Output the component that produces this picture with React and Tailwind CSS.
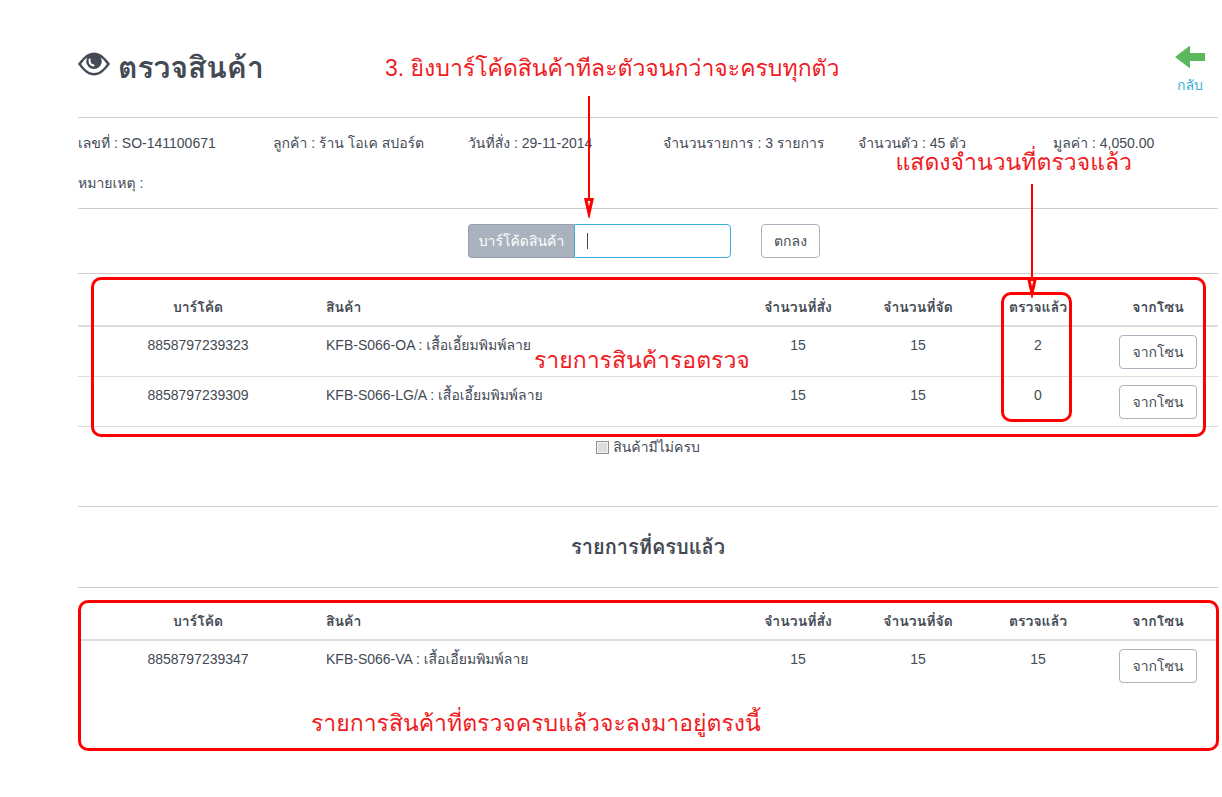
const info = [
  'เลขที่ : SO-141100671',
  'ลูกค้า : ร้าน โอเค สปอร์ต',
  'วันที่สั่ง : 29-11-2014',
  'จำนวนรายการ : 3 รายการ',
  'จำนวนตัว : 45 ตัว',
  'มูลค่า : 4,050.00',
];

const waiting = [
  { code: '8858797239323', name: 'KFB-S066-OA : เสื้อเอี้ยมพิมพ์ลาย', ordered: 15, prepared: 15, checked: 2 },
  { code: '8858797239309', name: 'KFB-S066-LG/A : เสื้อเอี้ยมพิมพ์ลาย', ordered: 15, prepared: 15, checked: 0 },
];

const completed = [
  { code: '8858797239347', name: 'KFB-S066-VA : เสื้อเอี้ยมพิมพ์ลาย', ordered: 15, prepared: 15, checked: 15 },
];

function EyeIcon() {
  return (
    <svg className="h-6 w-8 shrink-0" viewBox="0 0 32 24" fill="none" aria-hidden="true">
      <path d="M0 12C5.500 4.200 10.800.5 16 .5S26.500 4.200 32 12C26.500 19.800 21.200 23.500 16 23.500S5.500 19.800 0 12Z" fill="#434a54" />
      <path
        d="M3.200 12C5.200 9 7.300 6.700 9.800 5.200H22.200C24.700 6.700 26.800 9 28.800 12C24.800 18.200 20.500 21 16 21S7.200 18.200 3.200 12Z"
        fill="#fff"
      />
      <circle cx="16" cy="9.200" r="7.800" fill="#434a54" />
      <path d="M11.600 7.600C11.200 10.600 12.800 13 15.600 13.600" stroke="#fff" strokeWidth="2" strokeLinecap="round" />
    </svg>
  );
}

function ArrowLeftIcon() {
  return (
    <svg className="h-6 w-8" viewBox="0 0 32 24" aria-hidden="true">
      <path d="M1 12 16 .5V8h15v8H16v7.500Z" fill="#5cb85c" />
    </svg>
  );
}

function PointerLine({ className }) {
  return (
    <div className={`pointer-events-none absolute z-10 flex w-3 flex-col items-center ${className}`} aria-hidden="true">
      <div className="w-0.5 grow bg-[#ff0000]" />
      <svg className="h-5 w-3 shrink-0" viewBox="0 0 12 20">
        <path d="M1 0h10L6.500 20h-1Z" fill="#ff0000" />
        <path d="M4.800 3h2.400L6 8.500Z" fill="#fff" />
      </svg>
    </div>
  );
}

function Note({ className, children }) {
  return (
    <p className={`pointer-events-none absolute text-[23px] leading-8 whitespace-nowrap text-[#f01c24] ${className}`}>
      {children}
    </p>
  );
}

function Frame({ className }) {
  return (
    <div
      className={`pointer-events-none absolute rounded-[10px] border-3 border-[#ff0000] ${className}`}
      aria-hidden="true"
    />
  );
}

function OutlineButton({ type = 'button', children }) {
  return (
    <button type={type} className="h-[34px] rounded border border-[#aab2bd] bg-white px-3 leading-5">
      {children}
    </button>
  );
}

function ProductTable({ rows, label, ruled }) {
  const cell = ruled ? 'border-b border-[#dddddd] px-2 pt-2 pb-[7px]' : 'px-2 pt-2 pb-[7px]';
  const head = 'border-b-2 border-[#dddddd] p-2';
  return (
    <table className="w-full table-fixed border-separate border-spacing-0" aria-label={label}>
      <colgroup>
        <col className="w-60" />
        <col />
        <col className="w-30" />
        <col className="w-30" />
        <col className="w-30" />
        <col className="w-30" />
      </colgroup>
      <thead>
        <tr>
          <th className={head}>บาร์โค้ด</th>
          <th className={`${head} text-left`}>สินค้า</th>
          <th className={head}>จำนวนที่สั่ง</th>
          <th className={head}>จำนวนที่จัด</th>
          <th className={head}>ตรวจแล้ว</th>
          <th className={head}>จากโซน</th>
        </tr>
      </thead>
      <tbody>
        {rows.map((row) => (
          <tr key={row.code} className="align-top">
            <td className={`${cell} text-center`}>{row.code}</td>
            <td className={cell}>{row.name}</td>
            <td className={`${cell} text-center`}>{row.ordered}</td>
            <td className={`${cell} text-center`}>{row.prepared}</td>
            <td className={`${cell} text-center`}>{row.checked}</td>
            <td className={cell}>
              <div className="flex justify-center">
                <OutlineButton>จากโซน</OutlineButton>
              </div>
            </td>
          </tr>
        ))}
      </tbody>
    </table>
  );
}

export default function App() {
  return (
    <main className="min-h-screen bg-white pr-1 pb-12 pl-[78px] font-['Liberation_Sans','Loma','Garuda','Waree','Noto_Sans',sans-serif] text-sm leading-5 text-[#434a54]">
      <header className="relative flex h-[118px] items-start justify-between border-b border-[#cccccc] pt-[45px]">
        <h1 className="flex items-start gap-2 pt-[3px] text-[30px] leading-10 font-bold">
          <span className="pt-1">
            <EyeIcon />
          </span>
          ตรวจสินค้า
        </h1>
        <a href="#back" className="mr-3 flex flex-col items-center gap-1.5 text-[#3bafda]">
          <ArrowLeftIcon />
          กลับ
        </a>
        <Note className="top-13 left-[307px]">3. ยิงบาร์โค้ดสินค้าทีละตัวจนกว่าจะครบทุกตัว</Note>
        <PointerLine className="top-24 left-[505px] h-[122px]" />
      </header>

      <section className="relative border-b border-[#cccccc] pt-[15px] pb-[15px]">
        <div className="-mr-[30px] grid grid-cols-6">
          {info.map((text) => (
            <p key={text} className="whitespace-nowrap">{text}</p>
          ))}
        </div>
        <p className="mt-5">หมายเหตุ :</p>
        <Note className="top-7 right-[86px]">แสดงจำนวนที่ตรวจแล้ว</Note>
        <PointerLine className="top-[66px] right-[180px] h-[114px]" />
      </section>

      <form
        className="flex justify-center gap-[30px] border-b border-[#cccccc] py-[15px] pr-2"
        onSubmit={(e) => e.preventDefault()}
      >
        <div className="relative flex w-[263px]">
          <label
            htmlFor="barcode"
            className="flex h-[34px] w-[106px] shrink-0 items-center justify-center rounded-l border border-r-0 border-[#96a0ad] bg-[#aab2bd] text-white"
          >
            บาร์โค้ดสินค้า
          </label>
          <input
            id="barcode"
            type="text"
            autoFocus
            className="h-[34px] w-0 grow rounded-r border border-[#3bafda] bg-white px-3 caret-transparent outline-none"
          />
          <span className="pointer-events-none absolute top-[9px] left-[119px] h-4 w-px bg-[#434a54]" aria-hidden="true" />
        </div>
        <OutlineButton type="submit">ตกลง</OutlineButton>
      </form>

      <section className="relative pt-[15px]">
        <ProductTable rows={waiting} label="รายการสินค้ารอตรวจ" ruled />
        <Frame className="top-[3px] right-3 -bottom-[10px] left-[13px]" />
        <Frame className="top-[18px] right-[146px] bottom-[5px] w-[71px]" />
        <Note className="top-[70px] left-[456px]">รายการสินค้ารอตรวจ</Note>
      </section>

      <div className="flex h-20 items-start justify-center border-b border-[#cccccc] pt-[10px]">
        <label className="flex items-center gap-1">
          <input
            type="checkbox"
            className="size-[13px] appearance-none border border-[#8e8f8f] bg-[#dcdfe2] shadow-[inset_0_0_0_1px_#f4f4f4]"
          />
          สินค้ามีไม่ครบ
        </label>
      </div>

      <h2 className="flex h-[81px] items-center justify-center border-b border-[#cccccc] text-xl font-bold">
        รายการที่ครบแล้ว
      </h2>

      <section className="relative pt-[15px] pb-[61px]">
        <ProductTable rows={completed} label="รายการที่ครบแล้ว" />
        <Frame className="top-3 -right-px bottom-0 left-0" />
        <Note className="bottom-3 left-[233px]">รายการสินค้าที่ตรวจครบแล้วจะลงมาอยู่ตรงนี้</Note>
      </section>
    </main>
  );
}
